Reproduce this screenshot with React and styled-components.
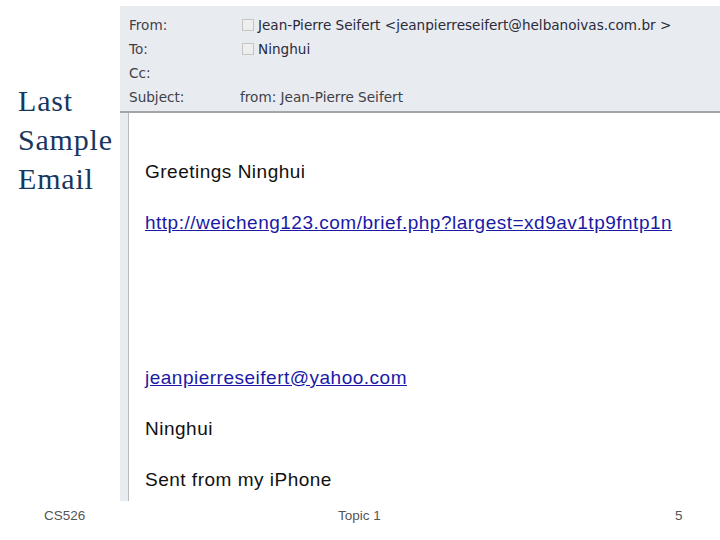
import React from 'react';
import styled, { createGlobalStyle } from 'styled-components';

const GlobalStyle = createGlobalStyle`
    html, body {
        margin: 0;
        padding: 0;
        background: #ffffff;
    }
`

const headers = [
    { label: 'From:', value: 'Jean-Pierre Seifert <jeanpierreseifert@helbanoivas.com.br >', box: true },
    { label: 'To:', value: 'Ninghui', box: true },
    { label: 'Cc:', value: '' },
    { label: 'Subject:', value: 'from: Jean-Pierre Seifert', subject: true },
]

function App() {
    return (
        <Slide>
            <GlobalStyle />
            <Main>
                <Title>Last<br />Sample<br />Email</Title>
                <Shot>
                    <Header>
                        {headers.map((h) => (
                            <HeaderRow key={h.label}>
                                <Label>{h.label}</Label>
                                <Value subject={h.subject}>
                                    {h.box && <Box />}
                                    {h.value}
                                </Value>
                            </HeaderRow>
                        ))}
                    </Header>
                    <BodyWrap>
                        <Gutter />
                        <Body>
                            <Line>Greetings Ninghui</Line>
                            <Line link>http://weicheng123.com/brief.php?largest=xd9av1tp9fntp1n</Line>
                            <Spacer />
                            <Line link>jeanpierreseifert@yahoo.com</Line>
                            <Line>Ninghui</Line>
                            <Line>Sent from my iPhone</Line>
                        </Body>
                    </BodyWrap>
                </Shot>
            </Main>
            <Footer>
                <FootLeft>CS526</FootLeft>
                <FootMid>Topic 1</FootMid>
                <FootRight>5</FootRight>
            </Footer>
        </Slide>
    )
}

const Slide = styled.div`
    width: 720px;
    height: 540px;
    overflow: hidden;
    display: flex;
    flex-direction: column;
`

const Main = styled.div`
    display: flex;
    flex-direction: row;
    padding-top: 6px;
    height: 501px;
    flex: none;
    box-sizing: border-box;
`

const Title = styled.div`
    width: 102px;
    padding: 75px 0 0 18px;
    font-family: "Liberation Serif", serif;
    font-size: 30px;
    letter-spacing: 0.8px;
    line-height: 39px;
    color: #17375e;
`

const Shot = styled.div`
    flex: 1;
    display: flex;
    flex-direction: column;
    overflow: hidden;
`

const Header = styled.div`
    background: #e8ebf0;
    padding: 7px 0 0 9px;
    box-sizing: border-box;
    height: 107px;
    flex: none;
    border-bottom: 2px solid #a3a5a8;
`

const HeaderRow = styled.div`
    display: flex;
    flex-direction: row;
    align-items: center;
    height: 24px;
    font-family: "DejaVu Sans", sans-serif;
    font-size: 13.6px;
    color: #3f4046;
`

const Label = styled.div`
    width: 111px;
    flex: none;
`

const Value = styled.div`
    display: flex;
    align-items: center;
    margin-left: ${props => props.subject ? '0' : '2px'};
    color: ${props => props.subject ? '#3f4046' : '#2a2a3a'};
`

const Box = styled.span`
    display: inline-block;
    width: 12px;
    height: 12px;
    margin-right: 4px;
    background: #eeeeee;
    border: 1px solid #c4c4c4;
    box-sizing: border-box;
`

const BodyWrap = styled.div`
    flex: 1;
    min-height: 0;
    display: flex;
    flex-direction: row;
    overflow: hidden;
`

const Gutter = styled.div`
    width: 8px;
    background: #e8ebf0;
    border-right: 1px solid #b8bbbf;
`

const Body = styled.div`
    flex: 1;
    padding: 48px 0 0 16px;
    font-family: "Liberation Sans", sans-serif;
    font-size: 19px;
    letter-spacing: 0.5px;
`

const Line = styled.div`
    height: 51px;
    line-height: 22px;
    color: ${props => props.link ? '#1a1aa6' : '#111111'};
    text-decoration: ${props => props.link ? 'underline' : 'none'};
`

const Spacer = styled.div`
    height: 104px;
`

const Footer = styled.div`
    flex: 1;
    display: flex;
    flex-direction: row;
    align-items: flex-start;
    padding-top: 7px;
    font-family: "Liberation Sans", sans-serif;
    font-size: 13.5px;
    color: #555555;
`

const FootLeft = styled.div`
    width: 290px;
    padding-left: 44px;
    box-sizing: border-box;
`

const FootMid = styled.div`
    flex: 1;
    padding-left: 48px;
`

const FootRight = styled.div`
    width: 45px;
`

export default App;
